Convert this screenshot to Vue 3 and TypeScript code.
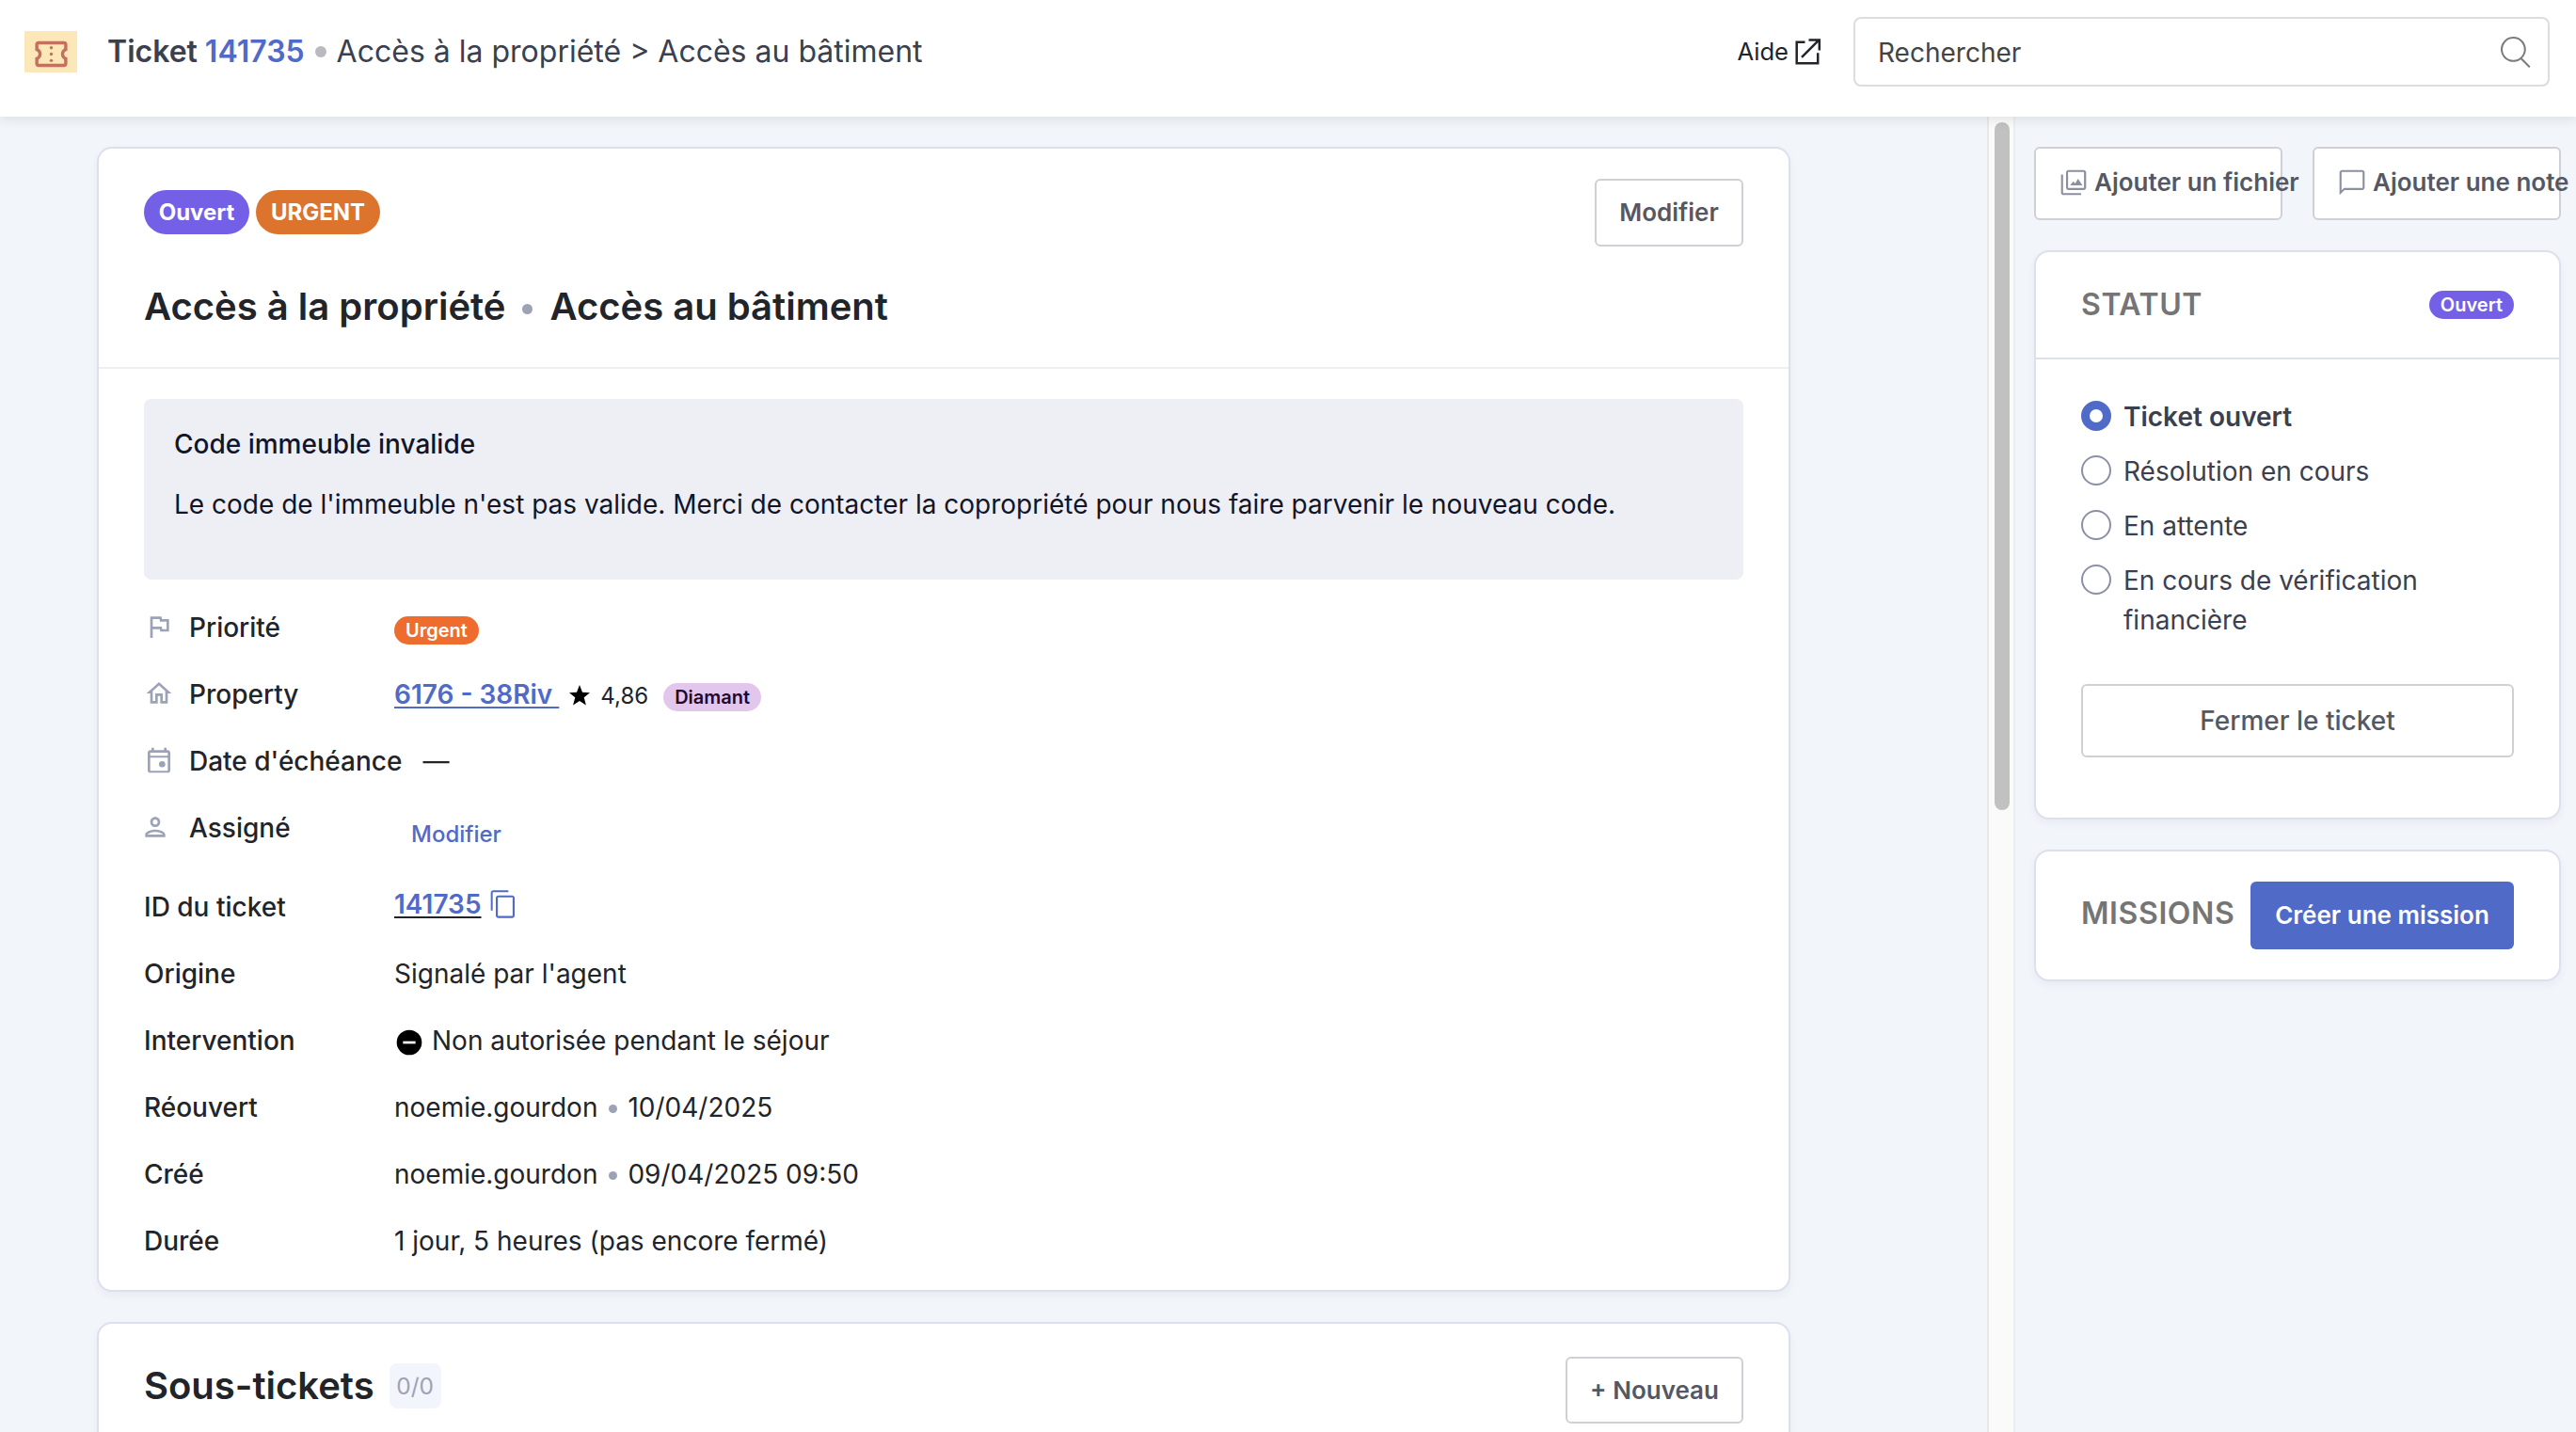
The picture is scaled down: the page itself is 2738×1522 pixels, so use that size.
<script setup lang="ts">
import { ref } from 'vue'

interface IconRow {
  label: string
  icon: 'flag' | 'home' | 'calendar' | 'person'
}

interface StatusOption {
  id: string
  label: string
}

const ticketId = '141735'
const category = 'Accès à la propriété'
const subCategory = 'Accès au bâtiment'

const rows: Record<string, IconRow> = {
  priority: { label: 'Priorité', icon: 'flag' },
  property: { label: 'Property', icon: 'home' },
  due: { label: "Date d'échéance", icon: 'calendar' },
  assignee: { label: 'Assigné', icon: 'person' },
}

const history = [
  { label: 'Réouvert', user: 'noemie.gourdon', date: '10/04/2025' },
  { label: 'Créé', user: 'noemie.gourdon', date: '09/04/2025 09:50' },
]

const statuses: StatusOption[] = [
  { id: 'open', label: 'Ticket ouvert' },
  { id: 'progress', label: 'Résolution en cours' },
  { id: 'waiting', label: 'En attente' },
  { id: 'finance', label: 'En cours de vérification financière' },
]
const selected = ref('open')
</script>

<template>
  <div class="app">
    <header class="topbar">
      <span class="ticket-icon">
        <svg width="41" height="41" viewBox="0 0 24 24" fill="currentColor">
          <path d="M22 10V6c0-1.11-.9-2-2-2H4c-1.1 0-1.99.89-1.99 2v4c1.1 0 1.99.9 1.99 2s-.89 2-2 2v4c0 1.1.9 2 2 2h16c1.1 0 2-.9 2-2v-4c-1.1 0-2-.9-2-2s.9-2 2-2zm-2-1.46c-1.19.69-2 1.99-2 3.46s.81 2.77 2 3.46V18H4v-2.54c1.19-.69 2-1.99 2-3.46 0-1.48-.8-2.77-1.99-3.46L4 6h16v2.54z" />
          <circle cx="12" cy="8" r="1" /><circle cx="12" cy="12" r="1" /><circle cx="12" cy="16" r="1" />
        </svg>
      </span>
      <h1 class="crumb">
        <b>Ticket</b><b class="num">{{ ticketId }}</b><i class="dot"></i><span>{{ category }} &gt; {{ subCategory }}</span>
      </h1>
      <a class="help">
        <span>Aide</span>
        <svg width="30" height="30" viewBox="0 0 30 30" fill="none" stroke="currentColor" stroke-width="2.5">
          <path d="M12.5 4.8H3.7V27.3H26.2V16.3" />
          <path d="M9 20.8L27.2 2.6M16.5 2.6H27.8V13.5" />
        </svg>
      </a>
      <div class="search">
        <span>Rechercher</span>
        <svg width="33" height="33" viewBox="0 0 16 16" fill="#7c7c7c">
          <path d="M11.742 10.344a6.5 6.5 0 1 0-1.397 1.398h-.001c.03.04.062.078.098.115l3.85 3.85a.5.5 0 0 0 .707-.707l-3.85-3.85a1.007 1.007 0 0 0-.115-.1zM12 6.5a5.5 5.5 0 1 1-11 0 5.5 5.5 0 0 1 11 0z" />
        </svg>
      </div>
    </header>

    <div class="body">
      <main class="content">
        <section class="card ticket">
          <div class="ticket-head">
            <div class="head-line">
              <div class="badges">
                <span class="badge violet">Ouvert</span>
                <span class="badge orange">URGENT</span>
              </div>
              <button class="btn edit">Modifier</button>
            </div>
            <h2 class="title"><span>{{ category }}</span><i class="dot"></i><span class="sub">{{ subCategory }}</span></h2>
          </div>

          <div class="notice">
            <strong>Code immeuble invalide</strong>
            <p>Le code de l'immeuble n'est pas valide. Merci de contacter la copropriété pour nous faire parvenir le nouveau code.</p>
          </div>

          <dl class="details">
            <div v-for="(row, key) in rows" :key="key" class="row" :class="key">
              <dt class="with-icon">
                <svg class="row-icon" :class="row.icon" width="32" height="32" viewBox="0 0 24 24" fill="currentColor">
                  <path v-if="row.icon === 'flag'" d="M12.36 6l.4 2H18v6h-3.36l-.4-2H7V6h5.36M14 4H5v17h2v-7h5.6l.4 2h7V6h-5.6L14 4z" />
                  <path v-else-if="row.icon === 'home'" d="M12 5.69l5 4.5V18h-2v-6H9v6H7v-7.81l5-4.5M12 3L2 12h3v8h6v-6h2v6h6v-8h3L12 3z" />
                  <g v-else-if="row.icon === 'calendar'">
                    <path d="M19 4h-1V2h-2v2H8V2H6v2H5c-1.1 0-2 .9-2 2v14c0 1.1.9 2 2 2h14c1.1 0 2-.9 2-2V6c0-1.1-.9-2-2-2zm0 16.4H5V10h14v10.4zm0-12H5V6h14v2.4z" />
                    <circle cx="14.500" cy="15.200" r="2.500" />
                  </g>
                  <path v-else d="M12 6c1.1 0 2 .9 2 2s-.9 2-2 2-2-.9-2-2 .9-2 2-2m0 10c2.700 0 5.800 1.290 6 2H6c.23-.72 3.310-2 6-2m0-12C9.790 4 8 5.790 8 8s1.790 4 4 4 4-1.790 4-4-1.790-4-4-4zm0 10c-2.670 0-8 1.340-8 4v2h16v-2c0-2.660-5.330-4-8-4z" />
                </svg>
                <span>{{ row.label }}</span>
              </dt>
              <dd v-if="key === 'priority'"><span class="pill urgent">Urgent</span></dd>
              <dd v-else-if="key === 'property'">
                <a class="link">6176 - 38Riv&nbsp;</a>
                <svg class="star" width="24" height="24" viewBox="0 0 24 24"><path d="M12 1l3 7.800 8 .4-6.300 5.100 2.200 8.200L12 17.900l-6.900 4.600 2.200-8.200L1 9.200l8-.4z" /></svg>
                <span class="rating">4,86</span>
                <span class="pill diamond">Diamant</span>
              </dd>
              <dd v-else-if="key === 'due'">—</dd>
              <dd v-else><a class="assign">Modifier</a></dd>
            </div>

            <div class="row">
              <dt>ID du ticket</dt>
              <dd class="id">
                <a class="link idlink">{{ ticketId }}</a>
                <svg class="copy" width="32" height="32" viewBox="0 0 24 24" fill="currentColor">
                  <path d="M16 1H4c-1.100 0-2 .9-2 2v14h1.500V2.500H16V1zm3 4H8c-1.100 0-2 .9-2 2v14c0 1.100.9 2 2 2h11c1.100 0 2-.9 2-2V7c0-1.100-.9-2-2-2zm.4 16.400H7.600V6.600h11.800v14.800z" />
                </svg>
              </dd>
            </div>
            <div class="row"><dt>Origine</dt><dd>Signalé par l'agent</dd></div>
            <div class="row">
              <dt>Intervention</dt>
              <dd>
                <svg class="minus" width="32" height="32" viewBox="0 0 24 24">
                  <circle cx="12" cy="12" r="10" /><path d="M7 12h10" stroke="#fff" stroke-width="2" />
                </svg>
                <span>Non autorisée pendant le séjour</span>
              </dd>
            </div>
            <div v-for="h in history" :key="h.label" class="row">
              <dt>{{ h.label }}</dt>
              <dd><span>{{ h.user }}</span><i class="dot"></i><span>{{ h.date }}</span></dd>
            </div>
            <div class="row"><dt>Durée</dt><dd>1 jour, 5 heures (pas encore fermé)</dd></div>
          </dl>
        </section>

        <section class="card subtickets">
          <h2>Sous-tickets</h2>
          <span class="count">0/0</span>
          <button class="btn new">+ Nouveau</button>
        </section>
      </main>

      <div class="scrollbar"><div class="thumb"></div></div>

      <aside class="side">
        <div class="actions">
          <button class="btn action">
            <svg width="32" height="32" viewBox="0 0 24 24" fill="currentColor">
              <path d="M20.300 3.600v12.800H7.600V3.600h12.700M20 2H8c-1.100 0-2 .9-2 2v12c0 1.100.9 2 2 2h12c1.100 0 2-.9 2-2V4c0-1.100-.9-2-2-2zM2 5.600v14.400c0 1.100.9 2 2 2h14v-1.600H3.600V5.600H2z" />
              <path d="M9.200 14.200l2.600-3.200 1.500 1.700 2.200-3.700 3.600 5.200z" />
            </svg>
            <span>Ajouter un fichier</span>
          </button>
          <button class="btn action">
            <svg width="32" height="32" viewBox="0 0 24 24" fill="currentColor">
              <path d="M20 2H4c-1.100 0-2 .9-2 2v18l4-4h14c1.100 0 2-.9 2-2V4c0-1.100-.9-2-2-2zm.4 14.400H5.500l-1.900 1.900V3.600h16.800v12.800z" />
            </svg>
            <span>Ajouter une note</span>
          </button>
        </div>

        <section class="card status">
          <div class="status-head">
            <h3>STATUT</h3>
            <span class="pill open">Ouvert</span>
          </div>
          <div class="options">
            <label v-for="s in statuses" :key="s.id" class="option" :class="{ on: selected === s.id }" @click="selected = s.id">
              <i class="radio"></i><span>{{ s.label }}</span>
            </label>
          </div>
          <button class="btn close">Fermer le ticket</button>
        </section>

        <section class="card missions">
          <h3>MISSIONS</h3>
          <button class="primary">Créer une mission</button>
        </section>
      </aside>
    </div>
  </div>
</template>

<style>
body {
  margin: 0;
  overflow: hidden;
}
</style>

<style scoped>
.app {
  width: 2738px;
  height: 1522px;
  overflow: hidden;
  display: flex;
  flex-direction: column;
  background: #f2f5fa;
  color: #212429;
  font: 400 28px/42px Inter, 'Liberation Sans', sans-serif;
}
.app * {
  box-sizing: border-box;
}
h1, h2, h3, p, dl, dd, dt {
  margin: 0;
  font-weight: inherit;
  font-size: inherit;
}
svg {
  display: block;
  flex: none;
}
button {
  font: inherit;
  padding: 0;
  border: 0;
}
.dot {
  flex: none;
  width: 9px;
  height: 9px;
  border-radius: 50%;
  background: #9ca3b5;
}

/* Top bar */
.topbar {
  position: relative;
  z-index: 1;
  flex: none;
  display: flex;
  align-items: flex-start;
  height: 124px;
  padding: 0 28px 0 26px;
  background: #fff;
  box-shadow: 0 2px 12px rgba(33, 36, 41, 0.12);
  white-space: nowrap;
}
.ticket-icon {
  display: flex;
  align-items: center;
  justify-content: center;
  width: 56px;
  height: 44px;
  margin-top: 33px;
  padding-top: 4px;
  background: #fbe7b7;
  color: #c4705f;
}
.crumb {
  display: flex;
  align-items: center;
  height: 50px;
  margin: 30px 0 0 32px;
  font-size: 32px;
  color: #3b404e;
}
.crumb b {
  font-weight: 600;
}
.crumb .num {
  margin-left: 8px;
  color: #506ac7;
}
.crumb .dot {
  width: 12px;
  height: 12px;
  margin: 0 11px;
  background: #b9b9bf;
}
.help {
  display: flex;
  align-items: center;
  gap: 5px;
  height: 40px;
  margin: 35px 34px 0 auto;
  font-size: 25.6px;
}
.search {
  display: flex;
  align-items: center;
  justify-content: space-between;
  width: 740px;
  height: 74px;
  margin-top: 18px;
  padding: 0 17px 0 24px;
  border: 2px solid #dcdce1;
  border-radius: 8px;
  color: #444;
}
.search span {
  padding-top: 2px;
}

/* Columns */
.body {
  flex: 1;
  min-height: 0;
  display: flex;
}
.content {
  width: 2112px;
  padding: 32px 209px 0 103px;
  overflow: hidden;
}
.scrollbar {
  width: 30px;
  padding: 6px 6px 0;
  background: #fafafa;
  border-left: 2px solid #e8e8e8;
  border-right: 2px solid #ededed;
}
.thumb {
  width: 16px;
  height: 731px;
  border-radius: 8px;
  background: #c1c1c1;
}
.side {
  flex: 1;
  padding: 32px 16px 0 20px;
}
.card {
  background: #fff;
  border: 2px solid #dcdfed;
  border-radius: 16px;
  box-shadow: 0 4px 10px rgba(33, 50, 90, 0.05);
}
.btn {
  border: 2px solid #cfcfd6;
  border-radius: 6px;
  background: #fff;
  color: #555863;
  font-weight: 600;
  font-size: 26px;
  white-space: nowrap;
}

/* Ticket card */
.ticket {
  height: 1217px;
}
.ticket-head {
  height: 234px;
  padding: 32px 48px 0;
  border-bottom: 2px solid #eeeff4;
}
.head-line {
  display: flex;
  justify-content: space-between;
  align-items: flex-start;
}
.badges {
  display: flex;
  gap: 7px;
  margin-top: 12px;
}
.badge {
  width: 112px;
  height: 47px;
  border-radius: 24px;
  color: #fff;
  font-weight: 700;
  font-size: 24px;
  line-height: 47px;
  text-align: center;
}
.badge.orange {
  width: 132px;
}
.violet, .open {
  background: #7360e7;
}
.orange {
  background: #dc742e;
}
.edit {
  width: 158px;
  height: 72px;
}
.title {
  display: flex;
  align-items: center;
  height: 60px;
  margin-top: 34px;
  font-weight: 600;
  font-size: 40px;
}
.title .dot {
  width: 11px;
  height: 11px;
  margin: 4px 18px 0;
}
.notice {
  height: 192px;
  margin: 32px 48px 0;
  padding: 27px 32px 0;
  border-radius: 8px;
  background: #eeeff5;
  color: #11152a;
}
.notice strong {
  display: block;
  font-weight: 500;
}
.notice p {
  margin-top: 22px;
}

/* Detail rows */
.details {
  padding: 16px 48px 0;
}
.row {
  display: flex;
  height: 71px;
  line-height: 71px;
  white-space: nowrap;
}
.row dt {
  flex: none;
  min-width: 266px;
  font-weight: 500;
}
.row dd {
  display: flex;
  align-items: center;
}
.row dd .dot {
  margin: 2px 11px 0 12px;
}
.with-icon {
  display: flex;
  align-items: center;
}
.row-icon {
  margin: 0 16px 3px 0;
  color: #9ca3b7;
}
.row-icon.person {
  margin-left: -4px;
  margin-right: 20px;
}
.due dt {
  margin-right: 22px;
}
.assignee {
  margin-bottom: 13px;
}
.pill {
  height: 30px;
  padding: 0 12px;
  border-radius: 15px;
  color: #fff;
  font-weight: 600;
  font-size: 20px;
  line-height: 30px;
}
.urgent {
  margin-top: 5px;
  background: #ee6c2e;
}
.link {
  color: #506ac7;
  font-weight: 600;
  text-decoration: underline 2px;
  text-underline-offset: 3px;
  text-decoration-skip-ink: none;
}
.star {
  margin: 1px 10px 0;
}
.rating {
  font-size: 24px;
  padding-top: 2px;
}
.diamond {
  margin: 5px 0 0 16px;
  background: #e2c6ec;
  color: #23082e;
}
.assign {
  margin-left: 18px;
  padding-top: 12px;
  color: #506ac7;
  font-weight: 500;
  font-size: 24px;
}
.idlink {
  margin-top: -7px;
  text-decoration-color: #212429;
}
.copy {
  margin: -8px 0 0 7px;
  color: #506ac7;
}
.minus {
  margin: 2px 8px 0 0;
}

/* Sub-tickets */
.subtickets {
  display: flex;
  align-items: flex-start;
  height: 300px;
  margin-top: 32px;
  padding: 0 48px;
}
.subtickets h2 {
  margin-top: 36px;
  font-weight: 600;
  font-size: 40px;
  line-height: 60px;
}
.count {
  width: 55px;
  height: 48px;
  margin: 42px 0 0 16px;
  border-radius: 8px;
  background: #f2f5fb;
  color: #9ca3b5;
  font-size: 24.5px;
  line-height: 48px;
  text-align: center;
}
.new {
  width: 189px;
  height: 71px;
  margin: 35px 0 0 auto;
}

/* Side panel */
.actions {
  display: flex;
  gap: 32px;
}
.action {
  display: flex;
  align-items: flex-start;
  width: 264px;
  height: 78px;
  padding: 20px 0 0 24px;
  line-height: 32px;
}
.action svg {
  color: #8c8f9f;
}
.action span {
  margin-left: 6px;
}
.status {
  height: 605px;
  margin-top: 32px;
}
.status h3, .missions h3 {
  color: #757575;
  font-weight: 600;
  font-size: 32px;
  letter-spacing: 0.6px;
}
.status-head {
  display: flex;
  justify-content: space-between;
  align-items: center;
  height: 114px;
  padding: 0 48px;
  border-bottom: 2px solid #dcdfed;
}
.options {
  display: flex;
  flex-direction: column;
  gap: 16px;
  padding: 40px 48px 0;
}
.option {
  display: flex;
  gap: 13px;
  color: #3b404e;
}
.radio {
  flex: none;
  width: 32px;
  height: 32px;
  margin-top: 4px;
  border: 2px solid #8b90a5;
  border-radius: 50%;
}
.on {
  font-weight: 600;
}
.on .radio {
  border: 9px solid #506ac7;
}
.close {
  display: block;
  width: 460px;
  height: 78px;
  margin: 47px 48px 0;
  font-size: 28px;
  font-weight: 500;
}
.missions {
  display: flex;
  justify-content: space-between;
  align-items: center;
  height: 140px;
  margin-top: 32px;
  padding: 0 48px;
  white-space: nowrap;
}
.missions h3 {
  padding-bottom: 5px;
}
.primary {
  width: 280px;
  height: 72px;
  border-radius: 6px;
  background: #506ac7;
  color: #fff;
  font-weight: 600;
  font-size: 26px;
}
</style>
